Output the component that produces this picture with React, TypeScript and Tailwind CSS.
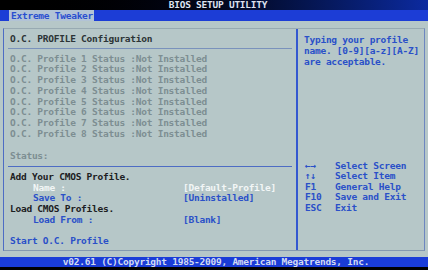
import React from "react";

const profiles = [1, 2, 3, 4, 5, 6, 7, 8];

const help: [string, string][] = [
  ["←→", "Select Screen"],
  ["↑↓", "Select Item"],
  ["F1", "General Help"],
  ["F10", "Save and Exit"],
  ["ESC", "Exit"],
];

export default function App() {
  return (
    <div className="w-[428px] h-[270px] bg-black flex flex-col overflow-hidden font-['DejaVu_Sans_Mono','Liberation_Mono',monospace] font-bold text-[9.5px] tracking-[-0.25px]">
      {/* title */}
      <div className="h-[10px] flex items-center justify-center pl-[8px] bg-gradient-to-r from-black via-[#02061a] to-[#0c2aa0] text-[#dde2f0] leading-[10px]">
        BIOS SETUP UTILITY
      </div>
      {/* tab bar */}
      <div className="h-[11px] bg-[#1c3dd6] flex pl-[9px]">
        <div className="w-[85px] bg-[#b2c3d6] text-[#2a4fd0] leading-[11px] pl-[2px]">
          Extreme Tweaker
        </div>
      </div>
      {/* main panel */}
      <div className="h-[236px] bg-[#b6c7c8] pt-[7px] pb-[6px] px-[3px]">
        <div className="h-full flex border-t border-t-[#98aab2] border-l border-l-[#4d6cc4] border-r border-r-[#6d86c0] border-b border-b-[#8498b0]">
          {/* left column */}
          <div className="w-[292px] pt-[4.5px] leading-[10.7px]">
            <div className="pl-[6px] text-[#2c3436]">O.C. PROFILE Configuration</div>
            <div className="mt-[4px] ml-[4px] w-[284px] h-px bg-[#7a92bc]" />
            <div className="mt-[4.5px] pl-[6px] text-[#7d8e92]">
              {profiles.map((n) => (
                <div key={n} className="whitespace-pre">
                  {`O.C. Profile ${n} Status :Not Installed`}
                </div>
              ))}
            </div>
            <div className="mt-[11.5px] pl-[6px] text-[#7d8e92]">Status:</div>
            <div className="mt-[4.7px] ml-[4px] w-[284px] h-px bg-[#4d6cc4]" />
            <div className="mt-[4.6px]">
              <div className="pl-[6px] text-[#1c2022]">Add Your CMOS Profile.</div>
              <div className="flex pl-[29px]">
                <div className="w-[150px] text-[#f2f6f6]">Name :</div>
                <div className="text-[#f2f6f6]">[Default-Profile]</div>
              </div>
              <div className="flex pl-[29px] text-[#2a50c8]">
                <div className="w-[150px]">Save To :</div>
                <div>[Uninstalled]</div>
              </div>
              <div className="pl-[6px] text-[#1c2022]">Load CMOS Profiles.</div>
              <div className="flex pl-[29px] text-[#2a50c8]">
                <div className="w-[150px]">Load From :</div>
                <div>[Blank]</div>
              </div>
              <div className="h-[10.7px]" />
              <div className="pl-[6px] text-[#2a50c8]">Start O.C. Profile</div>
            </div>
          </div>
          {/* right column */}
          <div className="flex-1 border-l-2 border-l-[#3458d0] pl-[6px] pt-[4.5px] text-[#2a50c8]">
            <div className="leading-[11px]">
              <div>Typing your profile</div>
              <div>name. [0-9][a-z][A-Z]</div>
              <div>are acceptable.</div>
            </div>
            <div className="mt-[94px] leading-[10.5px]">
              {help.map(([k, d]) => (
                <div key={k} className="flex">
                  <div className="w-[31px] pl-px">{k}</div>
                  <div>{d}</div>
                </div>
              ))}
            </div>
          </div>
        </div>
      </div>
      {/* footer */}
      <div className="h-[10px] bg-[#1a3cd8] flex items-center justify-center text-[#d2daf2] leading-[10px] pl-[4px]">
        v02.61 (C)Copyright 1985-2009, American Megatrends, Inc.
      </div>
      <div className="h-[3px] bg-black" />
    </div>
  );
}
